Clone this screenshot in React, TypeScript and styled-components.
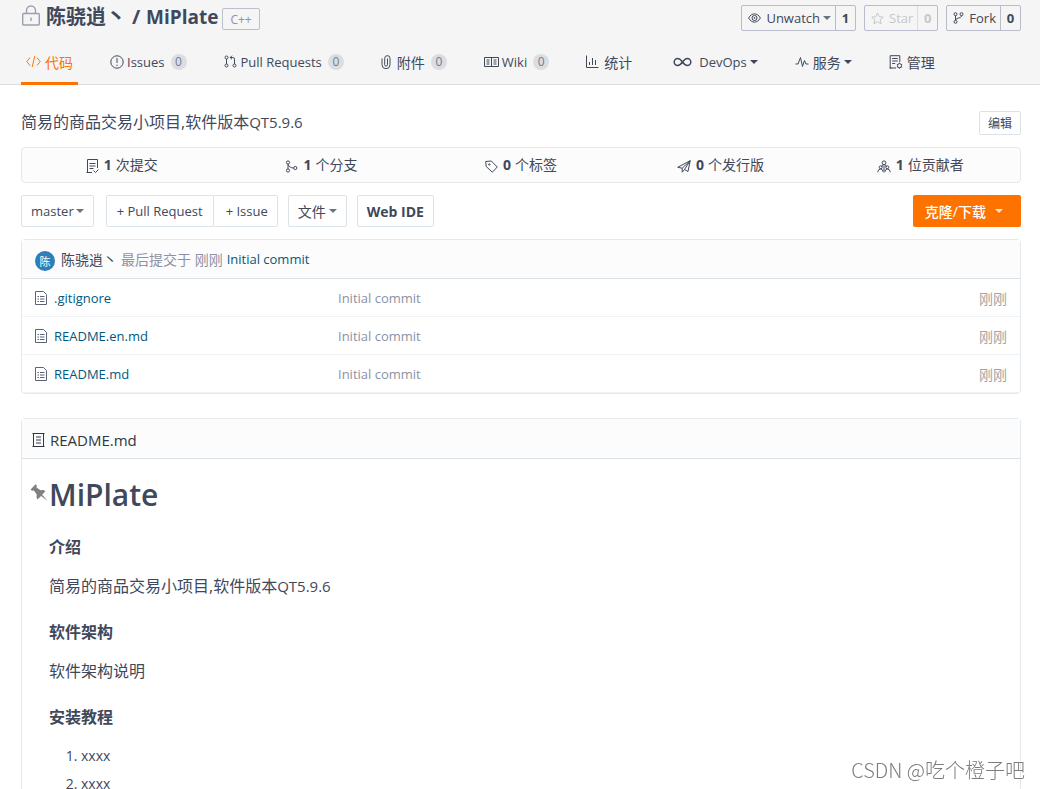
import React from "react";
import styled, { createGlobalStyle, css } from "styled-components";

const GlobalStyle = createGlobalStyle`
  *, *::before, *::after { box-sizing: border-box; }
  html, body { margin: 0; padding: 0; background: #fff; }
  body, button {
    font-family: "Open Sans", "Noto Sans CJK SC", sans-serif;
    font-size: 14px;
    color: #40485b;
  }
  a { color: inherit; text-decoration: none; }
  h1, h2, h3, p, ol { margin: 0; }
`;

const Page = styled.div`
  height: 100vh;
  overflow: hidden;
`;

const Header = styled.header`
  padding: 5px 19px 0 21px;
  background: #f5f5f5;
  border-bottom: 1px solid #dcddde;
`;

const TitleRow = styled.div`
  display: flex;
  justify-content: space-between;
  height: 26px;
`;

const Title = styled.h1`
  display: flex;
  align-items: center;
  height: 24px;
  font-size: 20px;
  line-height: 24px;
  font-weight: 700;
  white-space: nowrap;
`;

const TitleIcon = styled.span`
  display: flex;
  align-self: flex-start;
  width: 25px;
  padding-left: 1px;
  color: #9aa0b0;
`;

const RepoName = styled.span`
  font-size: 19px;
`;

const Slash = styled.span`
  width: 20px;
  padding-left: 6px;
`;

const LanguageTag = styled.a`
  align-self: flex-end;
  height: 22px;
  margin: 0 0 -1px 4px;
  padding: 0 7px;
  border: 1px solid #bcc0cc;
  border-radius: 2px;
  font-size: 12px;
  line-height: 21px;
  font-weight: 400;
  color: #8c92a4;
`;

const RepoActions = styled.div`
  display: flex;
  gap: 8px;
`;

const ActionGroup = styled.div<{ $muted?: boolean }>`
  display: flex;
  height: 26px;
  border: 1px solid #b9bccb;
  border-radius: 2px;
  color: ${(p) => (p.$muted ? "#c6c7cb" : "#40485b")};
`;

const ActionButton = styled.button`
  display: flex;
  align-items: center;
  gap: 5px;
  padding: 0 4px 0 6px;
  border: 0;
  background: none;
  color: inherit;
  font-size: 13px;
`;

const ActionCount = styled.a<{ $muted?: boolean }>`
  min-width: 20px;
  border-left: 1px solid ${(p) => (p.$muted ? "#dcddde" : "#b9bccb")};
  font-size: 13px;
  line-height: 24px;
  font-weight: 700;
  text-align: center;
`;

const Tabs = styled.nav`
  display: flex;
  gap: 27px;
  height: 54px;
  margin-bottom: -1px;
  padding-top: 10px;
`;

const Tab = styled.a<{ $active?: boolean }>`
  display: flex;
  align-items: center;
  height: 44px;
  padding: 0 5px;
  border-bottom: 3px solid ${(p) => (p.$active ? "#fe7300" : "transparent")};
  color: ${(p) => (p.$active ? "#fe7300" : "#40485b")};
  white-space: nowrap;
`;

const IconSlot = styled.span<{ $gap?: number }>`
  display: inline-flex;
  flex: none;
  margin-right: ${(p) => p.$gap ?? 3}px;
`;

const Latin = styled.span`
  font-size: 13px;
`;

const Badge = styled.span`
  min-width: 16px;
  height: 16px;
  margin-left: 6px;
  border-radius: 8px;
  background: #dcdde0;
  font-size: 12px;
  line-height: 16px;
  text-align: center;
  color: #6f7b98;
`;

const Caret = styled.span<{ $gap?: number; $color?: string }>`
  width: 8px;
  height: 4px;
  margin-left: ${(p) => p.$gap ?? 3}px;
  border: 4px solid transparent;
  border-top-color: ${(p) => p.$color ?? "#40485b"};
  border-bottom: 0;
`;

const Main = styled.main`
  padding: 26px 19px 24px 21px;
`;

const DescriptionRow = styled.div`
  display: flex;
  justify-content: space-between;
  height: 24px;
`;

const Description = styled.p`
  font-size: 16px;
  line-height: 22px;
`;

const DescriptionLatin = styled.span`
  font-size: 15px;
`;

const outlined = css`
  border: 1px solid #dce3e8;
  background: #fff;
`;

const EditButton = styled.button`
  ${outlined}
  padding: 2px 8px 0;
  border-radius: 2px;
  font-size: 12px;
  line-height: 20px;
`;

const Stats = styled.ul`
  display: grid;
  grid-template-columns: repeat(5, 1fr);
  height: 36px;
  margin: 12px 0;
  padding: 0;
  border: 1px solid #e3e9ed;
  border-radius: 4px;
  background: #fcfcfc;
  list-style: none;
`;

const Stat = styled.li`
  display: flex;
  align-items: center;
  justify-content: center;
  padding-bottom: 2px;
`;

const StatIcon = styled(IconSlot)`
  padding-top: 4px;
`;

const StatCount = styled.strong`
  margin-right: 4px;
`;

const Toolbar = styled.div`
  display: flex;
  height: 32px;
  margin-bottom: 12px;
`;

const ToolButton = styled.button<{ $bold?: boolean }>`
  ${outlined}
  display: flex;
  align-items: center;
  padding: 0 9px;
  border-radius: 2px;
  font-size: 14px;
  font-weight: ${(p) => (p.$bold ? 700 : 400)};
  white-space: nowrap;
`;

const ButtonGroup = styled.div`
  display: flex;
  margin: 0 10px 0 12px;

  ${ToolButton} {
    padding: 0 10px;
  }

  ${ToolButton} + ${ToolButton} {
    margin-left: -1px;
    padding: 0 9px 0 12px;
  }
`;

const IdeSlot = styled.div`
  display: flex;
  margin-left: 10px;
`;

const CloneButton = styled.button`
  display: flex;
  align-items: center;
  margin-left: auto;
  padding: 0 18px 0 12px;
  border: 0;
  border-radius: 2px;
  background: #fe7300;
  color: #fff;
  font-weight: 500;
`;

const Panel = styled.section`
  border: 1px solid #e3e9ed;
  border-radius: 4px;
`;

const CommitBar = styled.div`
  display: flex;
  align-items: center;
  height: 39px;
  padding: 0 13px;
  border-bottom: 1px solid #dbe3e9;
  background: #fcfcfc;
  white-space: pre;
`;

const Avatar = styled.span`
  width: 20px;
  height: 20px;
  margin: 3px 6px 0 0;
  border-radius: 50%;
  background: #2c7fb8;
  font-size: 11px;
  line-height: 21px;
  text-align: center;
  color: #fff;
`;

const Muted = styled.span`
  margin: 0 4px;
  color: #8c92a4;
`;

const CommitLink = styled.a`
  font-size: 13px;
  color: #005980;
`;

const FileTable = styled.table`
  width: 100%;
  border-collapse: separate;
  border-spacing: 0;
  table-layout: fixed;
`;

const FileCell = styled.td<{ $kind: "name" | "message" | "time" }>`
  height: 38px;
  padding: 0 13px;
  border-bottom: 1px solid #f0f3f6;
  ${(p) =>
    p.$kind === "name" &&
    css`
      width: 303px;
      font-size: 13px;
      color: #005980;
    `}
  ${(p) =>
    p.$kind === "message" &&
    css`
      font-size: 13px;
      color: #8c92a4;
    `}
  ${(p) =>
    p.$kind === "time" &&
    css`
      width: 120px;
      text-align: right;
      color: #a3a3a3;
    `}
`;

const FileLink = styled.a`
  display: flex;
  align-items: center;
`;

const FileIconSlot = styled(IconSlot)`
  color: #5b6375;
`;

const Readme = styled(Panel)`
  margin-top: 24px;
`;

const ReadmeHeader = styled.h2`
  display: flex;
  align-items: center;
  height: 40px;
  padding: 2px 10px 0;
  border-bottom: 1px solid #dbe3e9;
  background: #fcfcfc;
  font-size: 15px;
  font-weight: 400;
  color: #303643;
`;

const Article = styled.article`
  padding: 15px 27px 80px;
  font-size: 16px;
  line-height: 24px;

  h1 {
    display: flex;
    margin-left: -19px;
    font-size: 30px;
    line-height: 42px;
    font-weight: 600;
  }

  h3 {
    margin: 22px 0 15px;
    font-size: 16px;
    font-weight: 700;
  }

  h1 + h3 {
    margin-top: 19px;
  }

  ol {
    padding-left: 32px;
    font-size: 14px;
  }

  li + li {
    margin-top: 4px;
  }
`;

const PinLink = styled.a`
  display: flex;
  width: 19px;
  padding-top: 10px;
  color: #808080;
`;

const Watermark = styled.div`
  position: fixed;
  right: 15px;
  bottom: 4px;
  font-family: "Noto Sans CJK SC", sans-serif;
  font-size: 20px;
  line-height: 30px;
  font-weight: 300;
  color: #7d7d7d;
  text-shadow: -1px -1px 0 #fff;
`;

type IconName =
  | "lock" | "eye" | "star" | "fork" | "code" | "issue" | "pull" | "clip" | "wiki" | "chart"
  | "infinity" | "pulse" | "manage" | "commits" | "branch" | "tag" | "plane" | "people"
  | "file" | "doc" | "pin";

const shapes: Record<IconName, { w: number; h: number; body: React.ReactNode }> = {
  lock: {
    w: 18, h: 21,
    body: (
      <g strokeWidth="1.4">
        <rect x="0.7" y="8.500" width="16.600" height="11.500" rx="1" />
        <path d="M4.500 8.500V5.500a4.500 4.500 0 0 1 9 0v3M9 12.500v3.500" />
      </g>
    ),
  },
  eye: {
    w: 13, h: 10,
    body: (
      <>
        <path d="M0.600 5C2.200 2.200 4.200 0.900 6.500 0.900S10.800 2.200 12.400 5C10.800 7.800 8.800 9.100 6.500 9.100S2.200 7.800 0.600 5Z" />
        <circle cx="6.500" cy="5" r="2.500" />
        <circle cx="6.500" cy="5" r="0.500" />
      </>
    ),
  },
  star: { w: 13, h: 13, body: <path d="M6.500 1l1.700 3.700 4 .4-3 2.700.9 4-3.600-2.100-3.600 2.100.9-4-3-2.700 4-.4Z" /> },
  fork: {
    w: 11, h: 12,
    body: (
      <>
        <circle cx="2.500" cy="2.200" r="1.500" />
        <circle cx="2.500" cy="9.800" r="1.500" />
        <circle cx="8.500" cy="2.200" r="1.500" />
        <path d="M2.500 3.700v4.600M8.500 3.700C8.500 6.500 3.500 5.500 2.500 8" />
      </>
    ),
  },
  code: { w: 15, h: 13, body: <path d="M4 2.500L0.800 6.500L4 10.500M11 2.500l3.200 4L11 10.500M8.800 1L6.200 12" /> },
  issue: {
    w: 14, h: 14,
    body: (
      <>
        <circle cx="7" cy="7" r="6.200" />
        <path d="M7 3v5M7 9.700v1.300" />
      </>
    ),
  },
  pull: {
    w: 13, h: 13,
    body: (
      <>
        <circle cx="2.500" cy="2.500" r="1.500" />
        <circle cx="2.500" cy="10.500" r="1.500" />
        <circle cx="10.500" cy="10.500" r="1.500" />
        <path d="M2.500 4v5M10.500 9V4.200Q10.500 2.500 8.800 2.500H6.200M8 0.700L6.200 2.500L8 4.300" />
      </>
    ),
  },
  clip: { w: 10, h: 14, body: <path d="M6.500 3.500v6.200a1.400 1.400 0 0 1-2.800 0V3.300a2.600 2.600 0 0 1 5.300 0v6.400a4 4 0 0 1-8 0V3.500" /> },
  wiki: { w: 15, h: 12, body: <path d="M0.500 1.500h14v9h-14ZM7.500 1.500v9M2.500 4h3M2.500 6h3M2.500 8h3M9.500 4h3M9.500 6h3M9.500 8h3" /> },
  chart: { w: 13, h: 13, body: <path d="M0.500 0.500v12h12M3.500 10V7M6.500 10V3M9.500 10V5" /> },
  infinity: {
    w: 23, h: 10,
    body: <path strokeWidth="1.500" d="M13.500 5C11.900 2.800 10.500 1.500 8.700 1.500a3.500 3.500 0 0 0 0 7C10.500 8.500 11.900 7.200 13.500 5s3-3.500 4.800-3.500a3.500 3.500 0 0 1 0 7C16.500 8.500 15.100 7.200 13.500 5Z" />,
  },
  pulse: { w: 14, h: 12, body: <path d="M0.500 8H3L5.500 1.500L7.500 10.500L9.500 4.500L11 8h2.500" /> },
  manage: {
    w: 14, h: 14,
    body: (
      <>
        <path d="M7 13H1.200V0.700h9.600V7M3.200 3.500h5.600M3.200 6h5.600M3.200 8.500h3M0.500 13h2" />
        <circle cx="10.500" cy="10.700" r="2.100" />
        <path d="M10.500 7.700v1M10.500 12.700v1M7.900 9.200l.9.500M12.200 11.700l.9.500M7.900 12.200l.9-.5M12.200 9.700l.9-.5" />
      </>
    ),
  },
  commits: { w: 13, h: 14, body: <path d="M6 13.500H1.500V0.500h10V9M3.500 4.500h6M3.500 7h6M3.500 9.500h4M0.500 13.500h2M7.500 11.500l2 2L12.500 10.500" /> },
  branch: {
    w: 13, h: 13,
    body: (
      <>
        <circle cx="3" cy="2.500" r="1.600" />
        <circle cx="3" cy="10.500" r="1.600" />
        <circle cx="10.300" cy="8" r="1.600" />
        <path d="M3 4.100v4.800M3 4.500C4.200 7 6 8 8.700 8" />
      </>
    ),
  },
  tag: {
    w: 13, h: 13,
    body: (
      <>
        <path d="M0.700 1.500l5.600-.5L12.300 7 7.300 12.200 1.200 6.500Z" />
        <circle cx="4.300" cy="4.500" r="0.700" />
      </>
    ),
  },
  plane: { w: 14, h: 13, body: <path d="M0.700 7.300L13.200 0.700L11 11.500L7.500 9.500L5.200 12.200V8.200L13.200 0.700L7.500 9.500M5.200 8.200L0.700 7.300" /> },
  people: {
    w: 14, h: 13,
    body: (
      <>
        <circle cx="7" cy="2.800" r="1.900" />
        <path d="M4.500 7Q4.800 4.900 7 4.700Q9.200 4.900 9.500 7M7 6v5" />
        <circle cx="3.700" cy="7.300" r="1.500" />
        <circle cx="10.300" cy="7.300" r="1.500" />
        <path d="M0.700 12.300Q0.900 9.200 3.700 8.900Q6 9.200 6.300 12.300M7.700 12.300Q8 9.200 10.300 8.900Q13.100 9.200 13.300 12.300" />
      </>
    ),
  },
  file: { w: 12, h: 14, body: <path d="M0.500 0.500h8l3 3v10h-11ZM2.500 5.500h1.500M5 5.500h4.500M2.500 8h1.500M5 8h4.500M2.500 10.500h1.500M5 10.500h4.500" /> },
  doc: { w: 13, h: 14, body: <path d="M1.500 0.500h10v13h-10ZM4 4h5M4 7h5M4 10h5M0.500 0.500h12M0.500 13.500h12" /> },
  pin: {
    w: 19, h: 18,
    body: <path fill="currentColor" stroke="none" d="M5.600 0.300L6.900 1.600L6.400 3.400L10.600 6.300Q13.500 5.300 15.400 7.200L12.100 10.700L17.700 17L11 12L7.500 15.400Q5.700 13.300 6.800 10.500L3.900 6.400L1.900 6.800L0.600 5.500Z" />,
  },
};

function Icon({ name }: { name: IconName }) {
  const { w, h, body } = shapes[name];
  return (
    <svg width={w} height={h} viewBox={`0 0 ${w} ${h}`} fill="none" stroke="currentColor" strokeWidth="1" aria-hidden="true">
      {body}
    </svg>
  );
}

const tabs: { icon: IconName; label: string; latin?: boolean; count?: number; menu?: boolean; active?: boolean; gap?: number }[] = [
  { icon: "code", label: "代码", active: true, gap: 4 },
  { icon: "issue", label: "Issues", latin: true, count: 0 },
  { icon: "pull", label: "Pull Requests", latin: true, count: 0, gap: 4 },
  { icon: "clip", label: "附件", count: 0, gap: 6 },
  { icon: "wiki", label: "Wiki", latin: true, count: 0 },
  { icon: "chart", label: "统计", gap: 5 },
  { icon: "infinity", label: "DevOps", latin: true, menu: true, gap: 7 },
  { icon: "pulse", label: "服务", menu: true, gap: 4 },
  { icon: "manage", label: "管理", gap: 4 },
];

const stats: { icon: IconName; count: number; label: string }[] = [
  { icon: "commits", count: 1, label: "次提交" },
  { icon: "branch", count: 1, label: "个分支" },
  { icon: "tag", count: 0, label: "个标签" },
  { icon: "plane", count: 0, label: "个发行版" },
  { icon: "people", count: 1, label: "位贡献者" },
];

const files = [".gitignore", "README.en.md", "README.md"];

export default function App() {
  return (
    <Page>
      <GlobalStyle />
      <Header>
        <TitleRow>
          <Title>
            <TitleIcon><Icon name="lock" /></TitleIcon>
            <a href="#owner">陈骁逍丶</a>
            <Slash>/</Slash>
            <RepoName><a href="#repo">MiPlate</a></RepoName>
            <LanguageTag href="#language">C++</LanguageTag>
          </Title>
          <RepoActions>
            <ActionGroup>
              <ActionButton type="button">
                <Icon name="eye" />
                <span>Unwatch</span>
                <Caret $gap={-2} $color="#6b7182" />
              </ActionButton>
              <ActionCount href="#watchers">1</ActionCount>
            </ActionGroup>
            <ActionGroup $muted>
              <ActionButton type="button"><Icon name="star" />Star</ActionButton>
              <ActionCount href="#stars" $muted>0</ActionCount>
            </ActionGroup>
            <ActionGroup>
              <ActionButton type="button"><Icon name="fork" />Fork</ActionButton>
              <ActionCount href="#forks">0</ActionCount>
            </ActionGroup>
          </RepoActions>
        </TitleRow>
        <Tabs>
          {tabs.map((t) => (
            <Tab key={t.label} href={`#${t.icon}`} $active={t.active}>
              <IconSlot $gap={t.gap}><Icon name={t.icon} /></IconSlot>
              {t.latin ? <Latin>{t.label}</Latin> : t.label}
              {t.count !== undefined && <Badge>{t.count}</Badge>}
              {t.menu && <Caret />}
            </Tab>
          ))}
        </Tabs>
      </Header>

      <Main>
        <DescriptionRow>
          <Description>简易的商品交易小项目,软件版本<DescriptionLatin>QT5.9.6</DescriptionLatin></Description>
          <EditButton type="button">编辑</EditButton>
        </DescriptionRow>

        <Stats>
          {stats.map((s) => (
            <Stat key={s.label}>
              <StatIcon $gap={5}><Icon name={s.icon} /></StatIcon>
              <StatCount>{s.count}</StatCount>
              {s.label}
            </Stat>
          ))}
        </Stats>

        <Toolbar>
          <ToolButton type="button"><Latin>master</Latin><Caret $gap={2} $color="#6b7182" /></ToolButton>
          <ButtonGroup>
            <ToolButton type="button"><Latin>+ Pull Request</Latin></ToolButton>
            <ToolButton type="button"><Latin>+ Issue</Latin></ToolButton>
          </ButtonGroup>
          <ToolButton type="button">文件<Caret $color="#6b7182" /></ToolButton>
          <IdeSlot>
            <ToolButton type="button" $bold>Web IDE</ToolButton>
          </IdeSlot>
          <CloneButton type="button">克隆/下载<Caret $gap={9} $color="#ffe3cc" /></CloneButton>
        </Toolbar>

        <Panel>
          <CommitBar>
            <Avatar>陈</Avatar>
            <a href="#owner">陈骁逍丶</a>
            <Muted>最后提交于 刚刚</Muted>
            <CommitLink href="#commit">Initial commit</CommitLink>
          </CommitBar>
          <FileTable>
            <tbody>
              {files.map((name) => (
                <tr key={name}>
                  <FileCell $kind="name">
                    <FileLink href={`#${name}`}>
                      <FileIconSlot $gap={7}><Icon name="file" /></FileIconSlot>
                      {name}
                    </FileLink>
                  </FileCell>
                  <FileCell $kind="message"><a href="#commit">Initial commit</a></FileCell>
                  <FileCell $kind="time">刚刚</FileCell>
                </tr>
              ))}
            </tbody>
          </FileTable>
        </Panel>

        <Readme>
          <ReadmeHeader>
            <IconSlot $gap={5}><Icon name="doc" /></IconSlot>
            README.md
          </ReadmeHeader>
          <Article>
            <h1>
              <PinLink href="#miplate" aria-label="MiPlate"><Icon name="pin" /></PinLink>
              MiPlate
            </h1>
            <h3>介绍</h3>
            <p>简易的商品交易小项目,软件版本<DescriptionLatin>QT5.9.6</DescriptionLatin></p>
            <h3>软件架构</h3>
            <p>软件架构说明</p>
            <h3>安装教程</h3>
            <ol>
              <li>xxxx</li>
              <li>xxxx</li>
            </ol>
          </Article>
        </Readme>
      </Main>
      <Watermark>CSDN @吃个橙子吧</Watermark>
    </Page>
  );
}
